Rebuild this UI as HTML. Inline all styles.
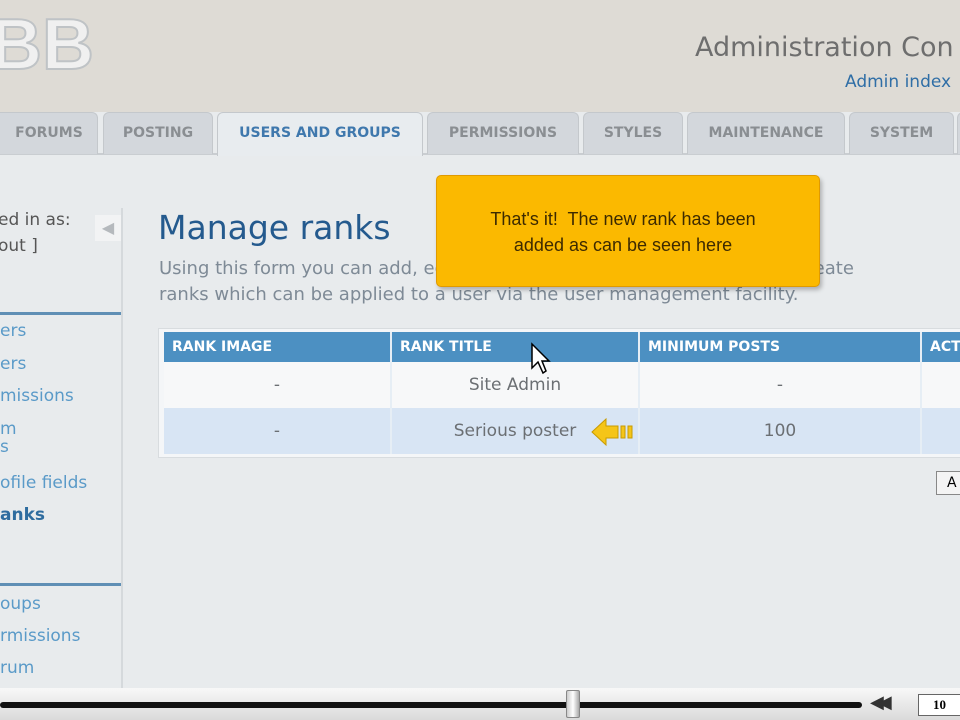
<!DOCTYPE html>
<html><head><meta charset="utf-8"><style>
*{margin:0;padding:0;box-sizing:border-box}
body{width:960px;height:720px;overflow:hidden;position:relative;background:#e8ebed;font-family:"DejaVu Sans","Liberation Sans",sans-serif}
.a{position:absolute}
#hdr{left:0;top:0;width:960px;height:112px;background:#dedbd5}
.tab{position:absolute;top:112px;height:42px;background:#d3d7dc;border:1px solid #c4c8cc;border-bottom:none;border-radius:6px 6px 0 0;color:#8a8e92;font-weight:bold;font-size:14px;text-align:center;line-height:40px}
.side{font-size:17px;color:#5a9ac8}
th{background:#4c90c2;color:#fff;font-size:14px;text-align:left;padding-left:8px;height:30px;border-right:2px solid #e6eef5}
td{font-size:17px;color:#6b6f73;text-align:center;height:46px;border-right:2px solid #e6eef5}
</style></head><body>
<div id="hdr" class="a"></div>
<div class="a" style="left:-10px;top:4px;font-size:72px;font-weight:bold;color:#f0f0f0;-webkit-text-stroke:2px #bfc3c6;font-family:'Liberation Sans',sans-serif">BB</div>
<div class="a" style="left:695px;top:32px;font-size:27px;color:#6e6e6e;white-space:nowrap">Administration Con</div>
<div class="a" style="left:845px;top:72px;font-size:17px;color:#2f6ea6;white-space:nowrap">Admin index</div>
<div class="a" style="left:0;top:153px;width:960px;height:2px;background:#c9cdd1"></div>
<div class="tab" style="left:-10px;width:108px;padding-left:10px">FORUMS</div>
<div class="tab" style="left:103px;width:110px">POSTING</div>
<div class="tab" style="left:217px;width:206px;background:#e8ecef;color:#3f78ad;height:44px">USERS AND GROUPS</div>
<div class="tab" style="left:427px;width:152px">PERMISSIONS</div>
<div class="tab" style="left:583px;width:100px">STYLES</div>
<div class="tab" style="left:687px;width:158px">MAINTENANCE</div>
<div class="tab" style="left:849px;width:105px">SYSTEM</div>
<div class="tab" style="left:957px;width:20px"></div>
<div class="a" style="left:121px;top:208px;width:2px;height:482px;background:#d5d9dc"></div>
<div class="a side" style="left:-2px;top:210px;color:#555">ed in as:</div>
<div class="a side" style="left:-2px;top:236px;color:#555">out ]</div>
<div class="a" style="left:95px;top:215px;width:26px;height:26px;background:#f2f3f4;color:#b5b9bd;font-size:16px;text-align:center;line-height:26px">◀</div>
<div class="a" style="left:0;top:312px;width:121px;height:3px;background:#5f8fb5"></div>
<div class="a side" style="left:0;top:321px">ers</div>
<div class="a side" style="left:0;top:354px">ers</div>
<div class="a side" style="left:0;top:386px">missions</div>
<div class="a side" style="left:0;top:420px;line-height:18px">m<br>s</div>
<div class="a side" style="left:0;top:473px">ofile fields</div>
<div class="a side" style="left:0;top:505px;font-weight:bold;color:#2e6c9f">anks</div>
<div class="a" style="left:0;top:583px;width:121px;height:3px;background:#5f8fb5"></div>
<div class="a side" style="left:0;top:594px">oups</div>
<div class="a side" style="left:0;top:626px">rmissions</div>
<div class="a side" style="left:0;top:658px">rum</div>
<div class="a" style="left:158px;top:208px;font-size:33px;color:#245a8e;white-space:nowrap">Manage ranks</div>
<div class="a" style="left:159px;top:256px;font-size:18px;color:#7e8a96;white-space:nowrap;line-height:26px">Using this form you can add, edit, view and delete ranks. You can also create<br>ranks which can be applied to a user via the user management facility.</div>
<div class="a" style="left:158px;top:328px;width:810px;height:130px;background:#f4f6f8;border:1px solid #d8dcdf"></div>
<table class="a" style="left:164px;top:332px;width:810px;border-collapse:collapse">
<tr><th style="width:227px">RANK IMAGE</th><th style="width:248px">RANK TITLE</th><th style="width:282px">MINIMUM POSTS</th><th>ACT</th></tr>
<tr style="background:#f7f8f9"><td>-</td><td>Site Admin</td><td>-</td><td></td></tr>
<tr style="background:#d8e5f4"><td>-</td><td>Serious poster</td><td>100</td><td></td></tr>
</table>
<svg class="a" style="left:590px;top:417px" width="46" height="30"><path d="M2 15 L16 2 L16 9 L28 9 L28 21 L16 21 L16 28 Z" fill="#f5c518" stroke="#c89a00"/><rect x="31" y="9" width="4" height="12" fill="#f5c518" stroke="#c89a00"/><rect x="38" y="9" width="4" height="12" fill="#f5c518" stroke="#c89a00"/></svg>
<svg class="a" style="left:530px;top:342px" width="22" height="34"><path d="M2 2 L2 26 L8 20 L13 31 L16 29 L12 19 L19 19 Z" fill="#fff" stroke="#000" stroke-width="1.5"/></svg>
<div class="a" style="left:936px;top:471px;width:30px;height:24px;border:1px solid #888;background:#f4f4f4;font-size:14px;padding-left:10px;line-height:22px">A</div>
<div class="a" style="left:436px;top:175px;width:384px;height:112px;background:#fbb900;border:1px solid #e09a00;border-radius:5px;box-shadow:2px 3px 4px rgba(0,0,0,.25);font-family:'Liberation Sans',sans-serif;font-size:18px;color:#3d2a00;text-align:center;padding-top:30px;line-height:26px;padding-right:10px">That's it!&nbsp; The new rank has been<br>added as can be seen here</div>
<div class="a" style="left:0;top:688px;width:960px;height:32px;background:linear-gradient(#f8f8f8,#dadada)"></div>
<div class="a" style="left:0;top:702px;width:862px;height:6px;background:#111;border-radius:3px"></div>
<div class="a" style="left:566px;top:690px;width:14px;height:28px;background:linear-gradient(90deg,#ccc,#fff,#aaa);border:1px solid #888;border-radius:2px"></div>
<div class="a" style="left:870px;top:692px;font-size:18px;color:#333;letter-spacing:-6px">◀◀</div>
<div class="a" style="left:918px;top:694px;width:50px;height:22px;border:1px solid #666;background:#fff;font-family:'Liberation Serif',serif;font-weight:bold;font-size:13px;padding-left:14px;line-height:20px">10</div>
</body></html>
